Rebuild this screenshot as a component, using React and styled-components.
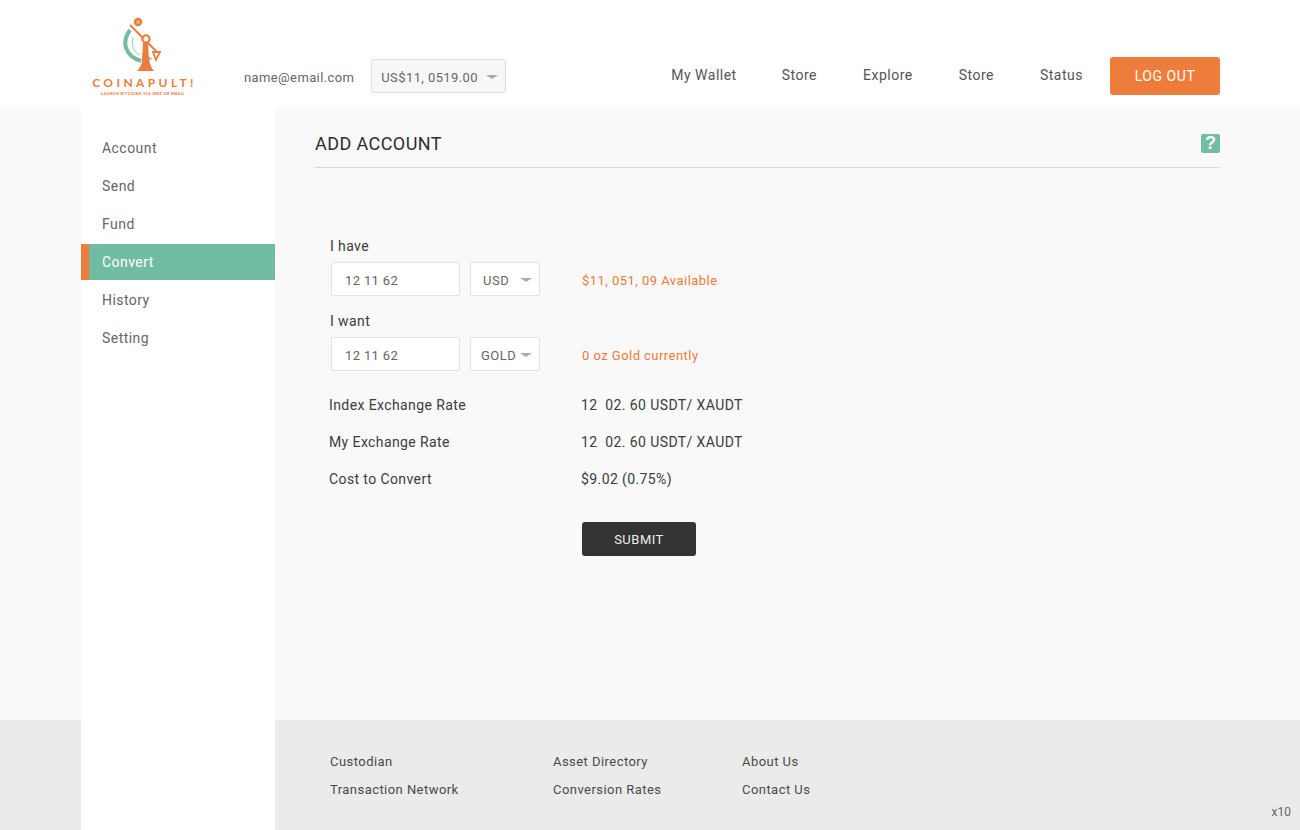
import React from 'react';
import styled, { createGlobalStyle } from 'styled-components';

const Global = createGlobalStyle`
  html, body { margin: 0; padding: 0; background: #fff; }
  body { font-family: Roboto, "Liberation Sans", sans-serif; color: #333; }
  * { box-sizing: border-box; }
`;
const Page = styled.div`
  width: 1300px; height: 830px; overflow: hidden; position: relative;
  display: flex; flex-direction: column;
`;
const Header = styled.header`
  height: 107px; background: #fff; display: flex; align-items: flex-start;
  padding: 0 80px 0 91px; flex: none;
`;
const Logo = styled.div`
  width: 104px; display: flex; flex-direction: column; align-items: center; padding-top: 15px;
`;
const LogoMark = styled.svg`
  width: 50px; height: 60px; display: block; margin-left: 1px;
`;
const LogoName = styled.div`
  margin-top: 1px; padding-left: 3px; font-size: 12px; line-height: 13px; font-weight: 700; color: #ee7d3b;
  letter-spacing: 3.4px; white-space: nowrap; font-family: Lato, Roboto, sans-serif;
`;
const LogoTag = styled.div`
  margin-top: 2px; font-size: 4px; line-height: 5px; font-weight: 700; color: #ee7d3b;
  letter-spacing: .42px; white-space: nowrap;
`;
const Email = styled.span`
  margin: 70px 0 0 49px; font-size: 13px; line-height: 16px; letter-spacing: .38px; color: #666;
`;
const Balance = styled.div`
  margin: 59px 0 0 17px; width: 135px; height: 34px; border: 1px solid #dedede; border-radius: 3px;
  background: #f7f7f7; display: flex; align-items: center; justify-content: space-between;
  padding: 2px 7px 0 9px; font-size: 13px; letter-spacing: .4px; color: #666;
`;
const Caret = styled.i`
  display: block; width: 0; height: 0; border-left: 6px solid transparent; border-right: 6px solid transparent;
  border-top: 4px solid #aaa; flex: none;
`;
const Nav = styled.nav`
  margin: 57px 0 0 auto; display: flex; align-items: center;
`;
const NavLink = styled.a`
  font-size: 14px; line-height: 36px; height: 38px; letter-spacing: .5px; color: #555; margin-right: ${p => p.$gap}px; white-space: nowrap;
`;
const LogOut = styled.button`
  width: 110px; height: 38px; border: 0; border-radius: 3px; background: #ee7d3b; color: #fff;
  font: 400 14px Roboto, sans-serif; letter-spacing: .55px; padding: 0;
`;
const Body = styled.div`
  flex: 1; display: grid; grid-template-columns: 81px 194px 1fr; grid-template-rows: 613px 110px;
  background: #f9f9f9;
`;
const Side = styled.aside`
  grid-column: 2; grid-row: 1 / 3; background: #fff; padding-top: 23px; display: flex; flex-direction: column; gap: 2px;
`;
const SideItem = styled.a`
  height: 36px; line-height: 36px; font-size: 14px; letter-spacing: .45px;
  padding-left: ${p => (p.$active ? 13 : 21)}px;
  color: ${p => (p.$active ? '#fff' : '#666')};
  background: ${p => (p.$active ? '#72bba4' : 'transparent')};
  border-left: ${p => (p.$active ? '8px solid #ee7d3b' : '0')};
`;
const Main = styled.main`
  grid-column: 3; grid-row: 1; padding: 0 80px 0 40px;
`;
const TitleBar = styled.div`
  height: 61px; border-bottom: 1px solid #d9d9d9; display: flex; align-items: center; justify-content: space-between;
  padding-top: 12px;
`;
const Title = styled.h1`
  margin: 2px 0 0; font-size: 18px; font-weight: 400; letter-spacing: .42px; color: #2e2e2e; line-height: 24px;
`;
const Help = styled.span`
  width: 19px; height: 19px; border-radius: 2px; background: #72bba4; color: #fff;
  font: 700 18px/19px "Liberation Sans", sans-serif; text-align: center; display: block;
`;
const Form = styled.div`
  padding: 70px 0 0 14px;
`;
const FieldLabel = styled.div`
  padding-left: 1px; font-size: 14px; line-height: 16px; letter-spacing: .4px; color: #3c3c3c; height: 24px;
`;
const FieldRow = styled.div`
  display: flex; align-items: center; padding-left: 2px; height: 34px; margin-bottom: 17px;
`;
const Input = styled.div`
  width: 129px; height: 34px; background: #fff; border: 1px solid #e2e2e2; border-radius: 2px;
  font-size: 13px; line-height: 35px; padding-left: 13px; letter-spacing: .35px; color: #666;
`;
const Select = styled.div`
  width: 70px; height: 34px; margin-left: 10px; background: #fff; border: 1px solid #e2e2e2; border-radius: 2px;
  display: flex; align-items: center; justify-content: space-between;
  padding: 2px 7px 0 ${p => p.$pad}px; font-size: 13px; letter-spacing: .5px; color: #666;
`;
const Avail = styled.span`
  margin-left: 42px; padding-top: 2px; font-size: 13px; font-weight: 400; letter-spacing: .46px; color: #f07a38;
`;
const Rates = styled.div`
  margin-top: -2px;
`;
const RateRow = styled.div`
  display: flex; height: 37px; align-items: center; font-size: 14px; letter-spacing: .4px; color: #3c3c3c;
`;
const RateName = styled.span`
  width: 252px;
`;
const Submit = styled.button`
  display: block; margin: 25px 0 0 253px; width: 114px; height: 34px; border: 0; border-radius: 3px; background: #333;
  color: #eee; font: 400 13px Roboto, sans-serif; letter-spacing: .5px; padding: 0;
`;
const FooterLeft = styled.div`
  grid-column: 1; grid-row: 2; background: #ebebeb;
`;
const Footer = styled.footer`
  grid-column: 3; grid-row: 2; background: #ebebeb; padding: 34px 0 0 55px; display: flex;
`;
const FootCol = styled.div`
  width: ${p => p.$w}px; display: flex; flex-direction: column; gap: 12px;
`;
const FootLink = styled.a`
  font-size: 13px; line-height: 16px; letter-spacing: .45px; color: #4a4a4a; white-space: nowrap;
`;
const Zoom = styled.span`
  position: absolute; right: 9px; bottom: 11px; font-size: 12px; line-height: 14px; color: #666;
`;

export default function App() {
  return (
    <Page>
      <Global />
      <Header>
        <Logo>
          <LogoMark viewBox="0 0 50 60">
            <path d="M11 15 C2 27 6 41 22 46" fill="none" stroke="#72bba4" strokeWidth="4" />
            <path d="M14 22 C12 31 15 37 21 40" fill="none" stroke="#a6d5c5" strokeWidth="1.2" />
            <path d="M30 42 l4 2 l-5 1z" fill="#72bba4" />
            <circle cx="19" cy="7" r="4.2" fill="#ee7d3b" />
            <circle cx="19" cy="7" r="1.8" fill="#f6b48d" />
            <path d="M11 10 L38 37" stroke="#ee7d3b" strokeWidth="2" />
            <path d="M34 37 L41 37 L37 45 Z" fill="#fff" stroke="#ee7d3b" strokeWidth="1.8" />
            <path d="M24 28 L29 28 L30 44 C31 50 33 54 35 56 L18 56 C20 54 23 50 23 44 Z" fill="#ee7d3b" />
            <circle cx="27" cy="24" r="3.6" fill="#fff" stroke="#ee7d3b" strokeWidth="2.2" />
          </LogoMark>
          <LogoName>COINAPULT!</LogoName>
          <LogoTag>LAUNCH BITCOINS VIA SMS OR EMAIL</LogoTag>
        </Logo>
        <Email>name@email.com</Email>
        <Balance>US$11, 0519.00<Caret /></Balance>
        <Nav>
          <NavLink $gap={45}>My Wallet</NavLink>
          <NavLink $gap={46}>Store</NavLink>
          <NavLink $gap={46}>Explore</NavLink>
          <NavLink $gap={46}>Store</NavLink>
          <NavLink $gap={27}>Status</NavLink>
          <LogOut>LOG OUT</LogOut>
        </Nav>
      </Header>
      <Body>
        <Side>
          <SideItem>Account</SideItem>
          <SideItem>Send</SideItem>
          <SideItem>Fund</SideItem>
          <SideItem $active>Convert</SideItem>
          <SideItem>History</SideItem>
          <SideItem>Setting</SideItem>
        </Side>
        <Main>
          <TitleBar>
            <Title>ADD ACCOUNT</Title>
            <Help>?</Help>
          </TitleBar>
          <Form>
            <FieldLabel>I have</FieldLabel>
            <FieldRow>
              <Input>12 11 62</Input>
              <Select $pad={12}>USD<Caret /></Select>
              <Avail>$11, 051, 09 Available</Avail>
            </FieldRow>
            <FieldLabel>I want</FieldLabel>
            <FieldRow>
              <Input>12 11 62</Input>
              <Select $pad={10}>GOLD<Caret /></Select>
              <Avail>0 oz Gold currently</Avail>
            </FieldRow>
            <Rates>
              <RateRow><RateName>Index Exchange Rate</RateName>12&nbsp; 02. 60 USDT/ XAUDT</RateRow>
              <RateRow><RateName>My Exchange Rate</RateName>12&nbsp; 02. 60 USDT/ XAUDT</RateRow>
              <RateRow><RateName>Cost to Convert</RateName>$9.02 (0.75%)</RateRow>
            </Rates>
            <Submit>SUBMIT</Submit>
          </Form>
        </Main>
        <FooterLeft />
        <Footer>
          <FootCol $w={223}><FootLink>Custodian</FootLink><FootLink>Transaction Network</FootLink></FootCol>
          <FootCol $w={189}><FootLink>Asset Directory</FootLink><FootLink>Conversion Rates</FootLink></FootCol>
          <FootCol $w={120}><FootLink>About Us</FootLink><FootLink>Contact Us</FootLink></FootCol>
        </Footer>
      </Body>
      <Zoom>x10</Zoom>
    </Page>
  );
}
